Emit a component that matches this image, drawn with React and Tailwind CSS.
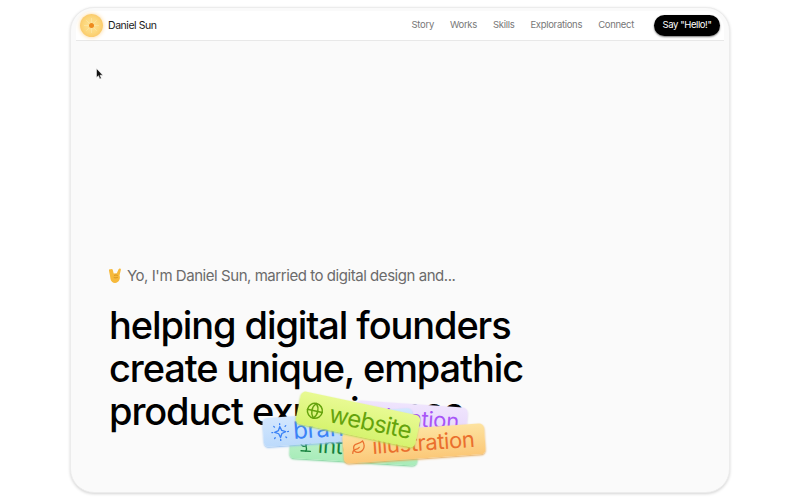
import { Globe, Leaf, Sprout } from "lucide-react";

const links = ["Story", "Works", "Skills", "Explorations", "Connect"];

function SunLogo() {
  return (
    <div className="relative flex h-[23px] w-[23px] items-center justify-center rounded-full bg-[radial-gradient(circle,#fde59a_0%,#fcd67a_50%,#f8bb58_100%)] shadow-[0_0_4px_#fbd596]">
      <svg width="17" height="17" viewBox="0 0 17 17" className="absolute">
        <path d="M8.500 1v15M1 8.500h15M3.200 3.200l10.600 10.600M13.800 3.200L3.200 13.800" stroke="#fbe7b0" strokeWidth="0.6" />
      </svg>
      <div className="relative h-[5px] w-[5px] rounded-full bg-[#ee8a1d]" />
    </div>
  );
}

function RockHand() {
  return (
    <svg width="14" height="16" viewBox="0 0 14 16" className="shrink-0">
      <path
        d="M2.200 1.200c.8-.4 1.400.1 1.600.9l.9 3.400 3.100-.2 1.800-4c.3-.8 1-1.100 1.600-.8.7.3.8 1 .6 1.700l-1.300 5.200c.6 1.500.5 3.300-.2 4.700-.8 1.700-2.300 2.900-4.300 2.900-2.300 0-4.200-1.700-4.500-4l-.6-3.800-.9-4.400c-.2-.6 0-1.300.6-1.500z"
        fill="#f6b93b"
      />
      <path d="M5 7.500c1.200-.6 2.600-.6 3.700 0M4.800 9.500c1.300.5 2.800.4 4-.2" stroke="#c98a1e" strokeWidth="0.8" fill="none" />
    </svg>
  );
}

function Cursor() {
  return (
    <svg width="8" height="12" viewBox="0 0 8 12" className="absolute left-[25px] top-[60px]">
      <path d="M0.500 0.500v9l2-1.800 1.300 3.200 1.500-.6-1.300-3.100h2.800z" fill="#111" stroke="#fff" strokeWidth="0.5" />
    </svg>
  );
}

function DottedSpark() {
  return (
    <svg width="18" height="18" viewBox="0 0 18 18" fill="none" stroke="#3b82f6" strokeWidth="1.300" className="shrink-0">
      <path d="M9 3.500l1.600 3.900 3.900 1.600-3.900 1.600L9 14.500l-1.600-3.900L3.500 9l3.900-1.600z" strokeLinejoin="round" />
      <path d="M9 .6v1M9 16.400v1M.6 9h1M16.400 9h1M3 3l.7.7M14.300 14.300l.7.7M15 3l-.7.7M3.700 14.300L3 15" strokeLinecap="round" />
    </svg>
  );
}

function Tag({ className, textClass, icon, label }) {
  return (
    <div className={`absolute flex items-center rounded-[5px] ${className}`}>
      {icon}
      <span className={`font-['Inter',sans-serif] ${textClass}`}>{label}</span>
    </div>
  );
}

function TagStack() {
  return (
    <div className="absolute left-[190px] top-[380px] h-[90px] w-[240px]">
      <Tag
        className="left-[94px] top-[16px] h-[29px] w-[112px] rotate-[4deg] justify-end bg-linear-to-b from-[#efe4fd] to-[#e6d6fb] pr-2 shadow-[0_1px_2px_#cdb8ee]"
        textClass="text-[22px] tracking-[-0.3px] text-[#a855f7]"
        label="animation"
      />
      <Tag
        className="left-[29px] top-[45px] h-[29px] w-[128px] rotate-[3.500deg] gap-1 bg-linear-to-b from-[#c4f3cf] to-[#a8ecb9] pl-2 shadow-[0_1px_2px_#6fcf8f]"
        textClass="text-[22px] tracking-[-0.3px] text-[#15803d]"
        icon={<Sprout size={16} color="#15803d" />}
        label="interface"
      />
      <Tag
        className="left-[2px] top-[25px] h-[29px] w-[150px] -rotate-[4deg] gap-1 bg-linear-to-b from-[#d3e7fe] to-[#bcdafb] pl-2 shadow-[0_1px_2px_#90bdf0]"
        textClass="text-[24px] tracking-[-0.3px] text-[#3b82f6]"
        icon={<DottedSpark />}
        label="branding"
      />
      <Tag
        className="left-[82px] top-[40px] h-[31px] w-[142px] -rotate-[4deg] gap-1.5 bg-linear-to-b from-[#fde3a0] to-[#fbc878] pl-2 shadow-[0_1px_2px_#e5a855]"
        textClass="text-[22px] tracking-[-0.4px] text-[#ea6f2d]"
        icon={<Leaf size={15} color="#ea6f2d" />}
        label="illustration"
      />
      <Tag
        className="left-[36px] top-[15px] h-[33px] w-[122px] rotate-[12deg] gap-1.5 bg-linear-to-b from-[#e8fa92] to-[#d6f36f] pl-2 shadow-[0_1px_2px_#b3d94f]"
        textClass="text-[24px] tracking-[-0.7px] text-[#65a30d]"
        icon={<Globe size={18} color="#65a30d" />}
        label="website"
      />
    </div>
  );
}

export default function App() {
  return (
    <div className="flex h-[500px] w-[800px] items-start justify-center overflow-hidden bg-white pt-[7px] font-['Inter',sans-serif]">
      <div className="relative flex h-[486px] w-[660px] flex-col overflow-hidden rounded-[24px] border border-[#ececec] bg-[#fafafa] px-[5px] pt-[3px] shadow-[0_1px_3px_#d4d4d4]">
        <nav className="flex h-[30px] items-center justify-between rounded-t-[18px] border-b border-[#e8e8e8] bg-white px-[4px]">
          <div className="flex items-center gap-[5px]">
            <SunLogo />
            <span className="text-[10.500px] tracking-[-0.45px] text-[#1a1a1a]">Daniel Sun</span>
          </div>
          <div className="flex items-center">
            <div className="flex items-center gap-[16px] text-[9.500px] tracking-[-0.3px] text-[#777]">
              {links.map((link) => (
                <span key={link}>{link}</span>
              ))}
            </div>
            <button className="ml-[20px] h-[21px] w-[66px] rounded-full bg-black text-[9.500px] tracking-[-0.4px] text-white shadow-[0_1px_2px_#777]">
              Say "Hello!"
            </button>
          </div>
        </nav>
        <Cursor />
        <div className="flex flex-1 flex-col justify-end pb-[59px] pl-[33px]">
          <div className="flex items-center gap-[4px] text-[15px] leading-[20px] tracking-[-0.45px] text-[#6b6b6b]">
            <RockHand />
            <span>Yo, I'm Daniel Sun, married to digital design and...</span>
          </div>
          <h1 className="mt-[18px] text-[38px] font-medium leading-[43px] tracking-[-1.1px] text-black">
            helping digital founders
            <br />
            create unique, empathic
            <br />
            product experiences
          </h1>
        </div>
        <TagStack />
      </div>
    </div>
  );
}
